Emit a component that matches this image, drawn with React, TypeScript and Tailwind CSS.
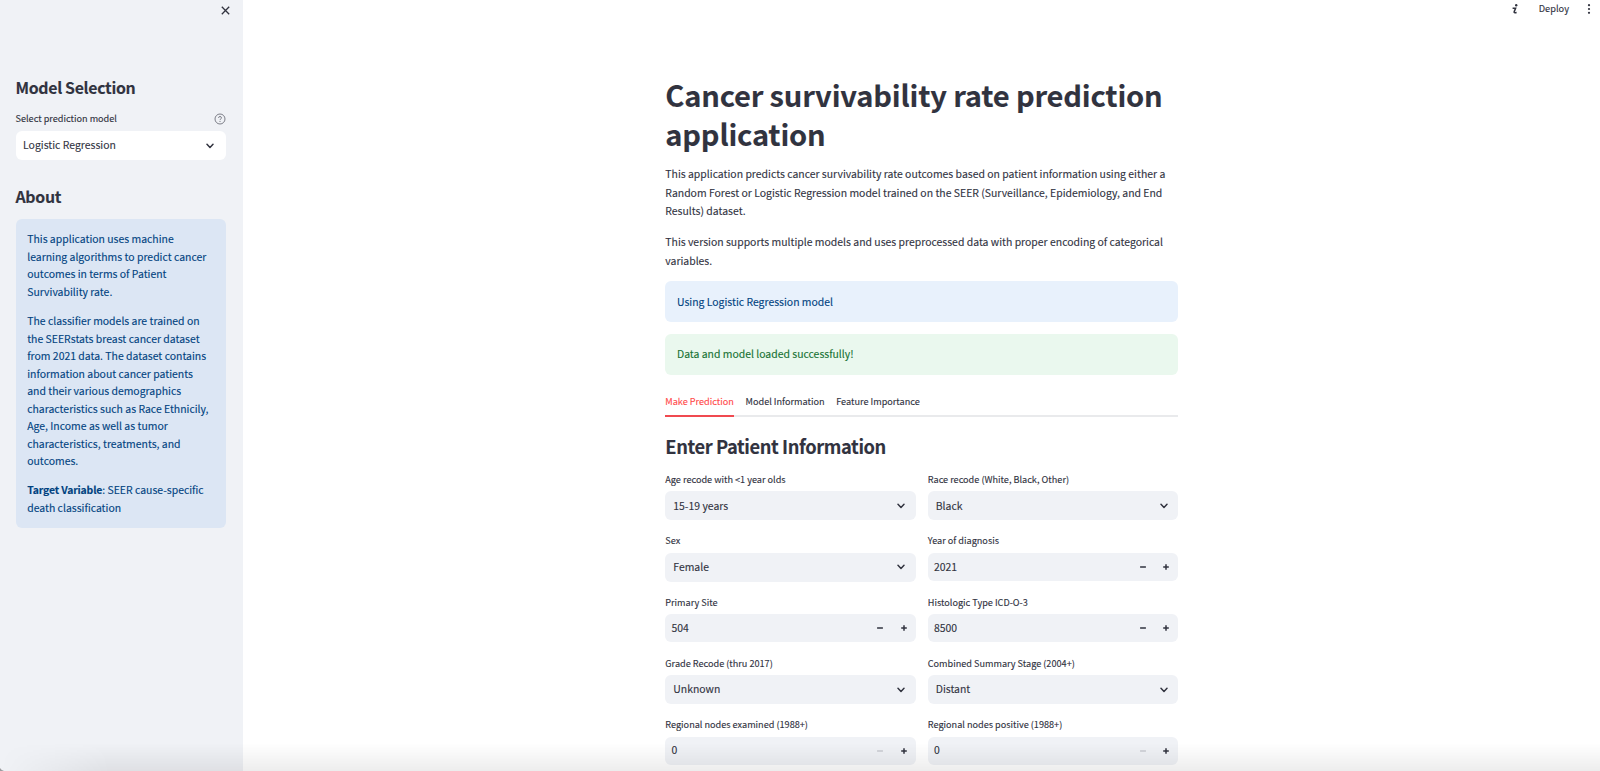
import React from "react";

const ChevronDown = () => (
  <svg viewBox="0 0 8 8" className="h-2 w-2 shrink-0" fill="none" stroke="#31333f" strokeWidth="1.5" strokeLinecap="round" strokeLinejoin="round">
    <path d="M1 2.3 4 5.4 7 2.3" />
  </svg>
);

const Minus = ({ faded }: { faded?: boolean }) => (
  <svg viewBox="0 0 8 8" className={faded ? "h-2 w-2 opacity-20" : "h-2 w-2"} fill="none" stroke="#31333f" strokeWidth="1.5">
    <path d="M1.1 4H6.9" />
  </svg>
);

const Plus = () => (
  <svg viewBox="0 0 8 8" className="h-2 w-2" fill="none" stroke="#31333f" strokeWidth="1.5">
    <path d="M1.2 4H6.8M4 1.2V6.8" />
  </svg>
);

type FieldProps = { label: string; value: string; kind: "select" | "number"; atMin?: boolean };

const Field = ({ label, value, kind, atMin }: FieldProps) => (
  <div className="flex h-[61.2px] flex-col">
    <div className="h-[16.3px] text-[9.13px] leading-[9px]">{label}</div>
    {kind === "select" ? (
      <div className="flex h-[29px] items-center justify-between rounded-[6px] bg-[#f0f2f6] pr-[10.6px] pl-[8px] text-[10.43px] leading-none">
        <span>{value}</span>
        <ChevronDown />
      </div>
    ) : (
      <div className="mt-[0.4px] flex h-[28px] items-center rounded-[6px] bg-[#f0f2f6] pr-[8px] pl-[6.2px] text-[10.43px] leading-none">
        <span className="flex-1">{value}</span>
        <div className="flex gap-[15.5px]">
          <Minus faded={atMin} />
          <Plus />
        </div>
      </div>
    )}
  </div>
);

const fields: FieldProps[] = [
  { label: "Age recode with <1 year olds", value: "15-19 years", kind: "select" },
  { label: "Race recode (White, Black, Other)", value: "Black", kind: "select" },
  { label: "Sex", value: "Female", kind: "select" },
  { label: "Year of diagnosis", value: "2021", kind: "number" },
  { label: "Primary Site", value: "504", kind: "number" },
  { label: "Histologic Type ICD-O-3", value: "8500", kind: "number" },
  { label: "Grade Recode (thru 2017)", value: "Unknown", kind: "select" },
  { label: "Combined Summary Stage (2004+)", value: "Distant", kind: "select" },
  { label: "Regional nodes examined (1988+)", value: "0", kind: "number", atMin: true },
  { label: "Regional nodes positive (1988+)", value: "0", kind: "number", atMin: true },
];

const Sidebar = () => (
  <aside className="h-full w-[243px] shrink-0 bg-[#f0f2f6] pr-[17.4px] pl-[15.5px]">
    <div className="-mr-[4.7px] flex h-[78px] justify-end pt-[5.5px]">
      <svg viewBox="0 0 9 9" className="h-[9px] w-[9px]" fill="none" stroke="#31333f" strokeWidth="1.3">
        <path d="M.8 .8 8.2 8.2M8.2 .8 .8 8.2" />
      </svg>
    </div>
    <h2 className="h-[36px] text-[15.9px] leading-[20px] font-semibold tracking-[-0.33px] whitespace-nowrap">Model Selection</h2>
    <div className="flex h-[17px] justify-between text-[9.13px] leading-[9.4px]">
      <span>Select prediction model</span>
      <svg viewBox="0 0 12 12" className="-mt-px h-3 w-3" fill="none" stroke="#7c7e87" strokeWidth="1">
        <circle cx="6" cy="6" r="5" />
        <path d="M4.5 4.9C4.5 3 7.5 3 7.5 4.9 7.5 5.9 6 5.9 6 7.1M6 8V9" />
      </svg>
    </div>
    <div className="flex h-[29px] items-center justify-between rounded-[6px] bg-white pr-[11.2px] pl-[7.6px] text-[10.43px] leading-none">
      <span>Logistic Regression</span>
      <ChevronDown />
    </div>
    <h2 className="h-[59px] pt-[27px] text-[15.9px] leading-[20px] font-semibold tracking-[-0.33px]">About</h2>
    <div className="flex h-[309px] flex-col gap-[11.7px] rounded-[6px] bg-[#dce6f4] pt-[11.4px] pl-[11.7px] text-[10.44px] leading-[17.5px] whitespace-nowrap text-[#004280]">
      <p>
        This application uses machine<br />learning algorithms to predict cancer<br />outcomes in terms of Patient<br />Survivability rate.
      </p>
      <p>
        The classifier models are trained on<br />the SEERstats breast cancer dataset<br />from 2021 data. The dataset contains<br />information about cancer patients<br />and their various demographics<br />characteristics such as Race Ethnicily,<br />Age, Income as well as tumor<br />characteristics, treatments, and<br />outcomes.
      </p>
      <p>
        <strong className="font-semibold tracking-[-0.15px]">Target Variable</strong>: SEER cause-specific<br />death classification
      </p>
    </div>
  </aside>
);

export default function App() {
  return (
    <div className="relative flex h-[771px] w-[1600px] overflow-hidden bg-white font-['Noto_Sans_CJK_SC','Noto_Sans',sans-serif] text-[#31333f] [-webkit-text-stroke:0.12px]">
      <Sidebar />
      <main className="flex flex-1 flex-col">
        <header className="flex h-[18px] shrink-0 items-center justify-end gap-[19.5px] pr-[9px] text-[9.25px] leading-none">
          <svg viewBox="0 0 8 12" className="h-[12px] w-[8px]" fill="none" stroke="#31333f" strokeWidth="1.5">
            <path d="M1.6 5.2H4.6L3.2 8.6Q2.7 10.2 5.6 9.6" />
            <circle cx="5.2" cy="2.2" r="1.2" fill="#31333f" stroke="none" />
          </svg>
          <div className="flex items-center gap-[18px]">
            <span>Deploy</span>
            <svg viewBox="0 0 4 12" className="h-[12px] w-[4px]" fill="#31333f">
              <circle cx="2" cy="2.2" r="1.1" />
              <circle cx="2" cy="6" r="1.1" />
              <circle cx="2" cy="9.8" r="1.1" />
            </svg>
          </div>
        </header>
        <div className="ml-[422.3px] w-[512.9px] whitespace-nowrap">
          <h1 className="mt-[57px] h-[90px] text-[29.1px] leading-[38.5px] font-bold tracking-[-0.18px]">
            Cancer survivability rate prediction<br />application
          </h1>
          <p className="h-[67.7px] text-[10.44px] leading-[18.66px]">
            This application predicts cancer survivability rate outcomes based on patient information using either a<br />
            Random Forest or Logistic Regression model trained on the SEER (Surveillance, Epidemiology, and End<br />
            Results) dataset.
          </p>
          <p className="h-[48.7px] text-[10.44px] leading-[18.9px]">
            This version supports multiple models and uses preprocessed data with proper encoding of categorical<br />
            variables.
          </p>
          <div className="flex h-[41px] items-center rounded-[6px] bg-[#e8f1fc] pl-[11.7px] text-[10.43px] leading-none text-[#004280]">
            Using Logistic Regression model
          </div>
          <div className="mt-[11.7px] flex h-[41px] items-center rounded-[6px] bg-[#eaf8ee] pb-px pl-[11.7px] text-[10.43px] leading-none text-[#177233]">
            Data and model loaded successfully!
          </div>
          <nav className="mt-[11.7px] flex h-[30.6px] gap-[11.7px] border-b-2 border-[#e9eaec] text-[9.13px] leading-[28.6px]">
            <span className="-mb-0.5 border-b-2 border-[#f04a50] text-[#ff4b4b]">Make Prediction</span>
            <span>Model Information</span>
            <span>Feature Importance</span>
          </nav>
          <h2 className="h-[57.8px] pt-[17px] text-[18.3px] leading-[24px] font-semibold tracking-[-0.4px]">Enter Patient Information</h2>
          <div className="grid grid-cols-2 gap-x-[12px]">
            {fields.map((f) => (
              <Field key={f.label} {...f} />
            ))}
          </div>
        </div>
      </main>
      <div className="pointer-events-none absolute right-0 bottom-0 left-0 h-7 bg-linear-to-b from-black/0 to-black/7 [mask-image:linear-gradient(to_right,transparent,black_110px)]" />
      <svg viewBox="0 0 4 3" className="pointer-events-none absolute bottom-0 left-0 h-[3px] w-1" fill="#9c9da0">
        <path d="M0 0Q1 2 4 3H0Z" />
      </svg>
    </div>
  );
}
